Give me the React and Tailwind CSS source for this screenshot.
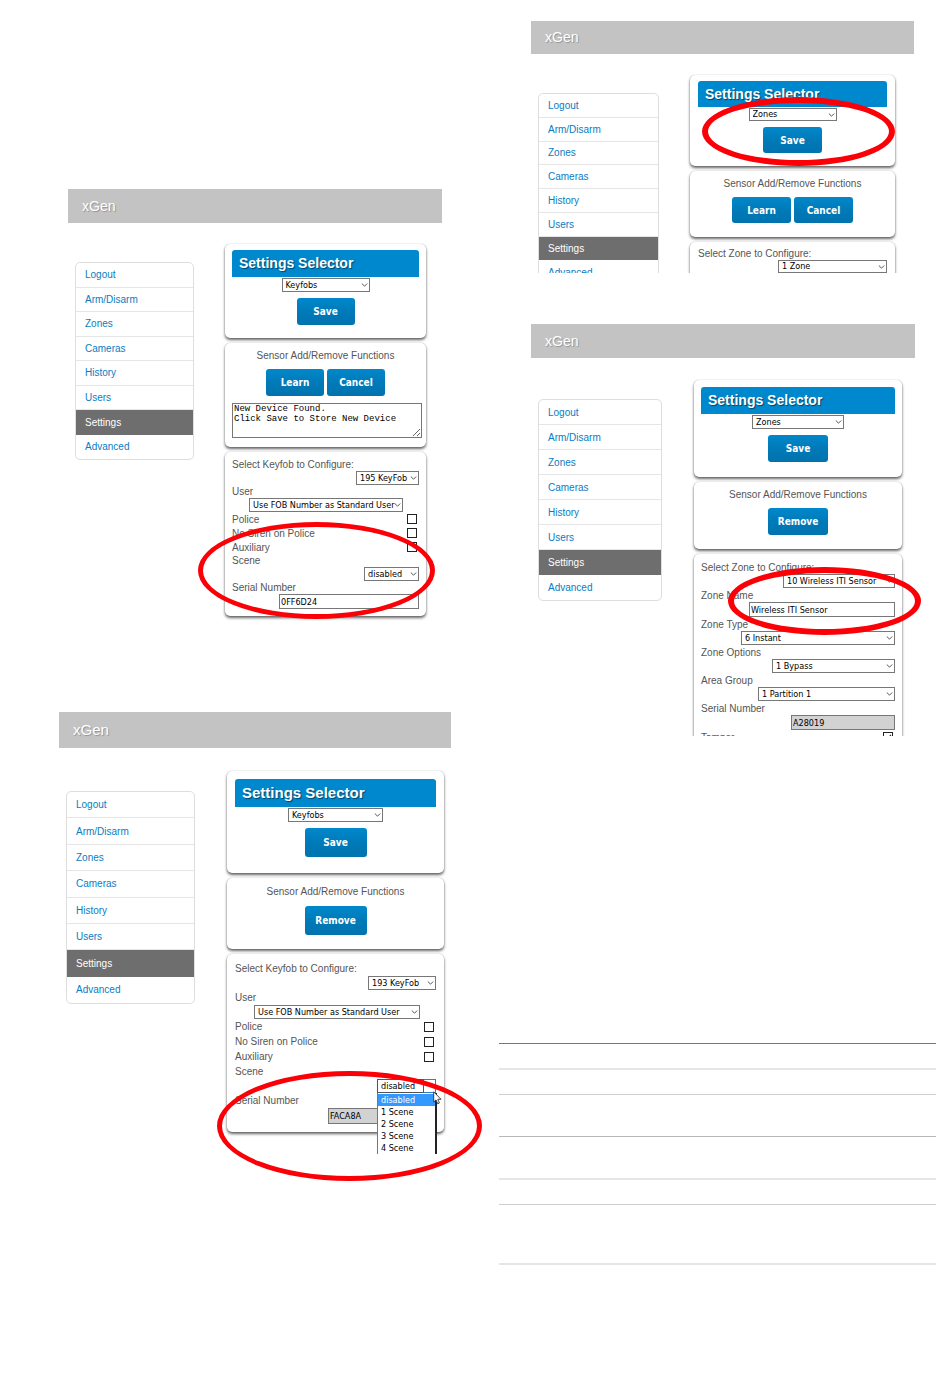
import React, { useId } from "react";
import clsx from "clsx";

const NAV_ITEMS = ["Logout", "Arm/Disarm", "Zones", "Cameras", "History", "Users", "Settings", "Advanced"];

const SCENES = ["disabled", "1 Scene", "2 Scene", "3 Scene", "4 Scene"];

// One entry per console size, the consoles are shown at slightly different scales
const SIZES = {
  small: {
    header: "h-[34px] text-[14px] pl-[14px]",
    nav: "w-[119px] h-[198px] mt-[39px]",
    gutter: "gap-x-[31px] pr-[16px]",
    stack: "pt-[21px] gap-[5px]",
    card: "px-[7px]",
    top: "pt-[6px] pb-[13px]",
    title: "h-[27px] text-[14px]",
    page: "w-[88px]",
    select: "h-[14px]",
    button: "w-[58px] h-[27px]",
    caption: "leading-[14px]",
    form: "pt-[6px] pb-[7px]",
    label: "h-[13px]",
    check: "h-[14px]",
    input: "h-[15px]",
  },
  compact: {
    header: "h-[33px] text-[14px] pl-[14px]",
    nav: "w-[121px] h-[192px] mt-[39px]",
    gutter: "gap-x-[31px] pr-[19px]",
    stack: "pt-[21px] gap-[5px]",
    card: "px-[8px]",
    top: "pt-[6px] pb-[13px]",
    title: "h-[26px] text-[14px]",
    page: "w-[88px]",
    select: "h-[13px]",
    button: "w-[59px] h-[26px]",
    caption: "leading-[14px]",
    form: "pt-[5px] pb-[7px]",
    label: "h-[13px]",
    check: "h-[14px]",
    input: "h-[15px]",
  },
  medium: {
    header: "h-[34px] text-[14px] pl-[14px]",
    nav: "w-[124px] h-[202px] mt-[41px]",
    gutter: "gap-x-[32px] pr-[13px]",
    stack: "pt-[22px] gap-[5px]",
    card: "px-[7px]",
    top: "pt-[7px] pb-[15px]",
    title: "h-[27px] text-[14px]",
    page: "w-[92px]",
    select: "h-[14px]",
    button: "w-[60px] h-[27px]",
    caption: "leading-[14px]",
    form: "pt-[6px] pb-[7px]",
    label: "h-[14px]",
    check: "h-[14px]",
    input: "h-[15px]",
  },
  large: {
    header: "h-[36px] text-[15px] pl-[14px]",
    nav: "w-[129px] h-[213px] mt-[43px]",
    gutter: "gap-x-[32px] pr-[7px]",
    stack: "pt-[23px] gap-[5px]",
    card: "px-[8px]",
    top: "pt-[8px] pb-[16px]",
    title: "h-[28px] text-[15px]",
    page: "w-[95px]",
    select: "h-[14px]",
    button: "w-[62px] h-[29px]",
    caption: "leading-[16px]",
    form: "pt-[7px] pb-[8px]",
    label: "h-[15px]",
    check: "h-[15px]",
    input: "h-[16px]",
  },
};

const FIELD_FONT = "font-['DejaVu_Sans_Condensed','DejaVu_Sans',sans-serif] text-[9px] text-black";

function Card({ size, className, children }) {
  return (
    <section
      className={clsx(
        "rounded-[5px] bg-white shadow-[0_0_1px_rgba(0,0,0,0.35),0_2px_3px_rgba(0,0,0,0.6)]",
        size.card,
        className
      )}
    >
      {children}
    </section>
  );
}

function Select({ size, id, label, value, className }) {
  return (
    <div className={clsx("relative", size.select, className)}>
      <select
        id={id}
        aria-label={label}
        defaultValue={value}
        className={clsx("block h-full w-full appearance-none border border-[#777] bg-white pl-[3px] leading-none", FIELD_FONT)}
      >
        <option>{value}</option>
      </select>
      <svg className="pointer-events-none absolute right-[2px] top-1/2 h-[4px] w-[7px] -translate-y-1/2" viewBox="0 0 7 4">
        <path d="M0.8 0.5 L3.5 3.2 L6.2 0.5" fill="none" stroke="#555" strokeWidth="1" />
      </svg>
    </div>
  );
}

function Button({ size, children }) {
  return (
    <button
      type="button"
      className={clsx(
        "rounded-[3px] bg-linear-to-b from-[#0088cc] via-[#007ab8] to-[#0073ae] text-center font-['DejaVu_Sans_Condensed','DejaVu_Sans',sans-serif] text-[10px] font-bold text-white",
        size.button
      )}
    >
      {children}
    </button>
  );
}

function SelectField({ size, label, value, className }) {
  const id = useId();
  return (
    <div>
      <label htmlFor={id} className={clsx("flex items-center", size.label)}>{label}</label>
      <Select size={size} id={id} value={value} className={clsx("ml-auto", className)} />
    </div>
  );
}

function TextField({ size, label, value, readOnly, className }) {
  const id = useId();
  return (
    <div>
      <label htmlFor={id} className={clsx("flex items-center", size.label)}>{label}</label>
      <input
        id={id}
        type="text"
        defaultValue={value}
        readOnly={readOnly}
        className={clsx(
          "ml-auto block border border-[#777] px-[1px]",
          readOnly ? "bg-[#d2d2d2]" : "bg-white",
          FIELD_FONT,
          size.input,
          className
        )}
      />
    </div>
  );
}

function CheckField({ size, label, checked }) {
  const id = useId();
  return (
    <div className={clsx("flex items-center justify-between pr-[2px]", size.check)}>
      <label htmlFor={id}>{label}</label>
      <span className="relative flex">
        <input
          id={id}
          type="checkbox"
          defaultChecked={checked}
          className="peer h-[10px] w-[10px] appearance-none border border-[#222] bg-white"
        />
        <svg className="pointer-events-none absolute inset-0 hidden h-[10px] w-[10px] peer-checked:block" viewBox="0 0 10 10">
          <path d="M2 5 L4.2 7.2 L8 2.8" fill="none" stroke="#222" strokeWidth="1.1" />
        </svg>
      </span>
    </div>
  );
}

// Scene drop-down in its opened state, the list lies over the serial number
function SceneField({ size }) {
  const id = useId();
  return (
    <div>
      <label htmlFor={id} className={clsx("flex items-center", size.label)}>Scene</label>
      <div className="relative ml-auto h-[14px] w-[59px]">
        <select
          id={id}
          defaultValue="disabled"
          className={clsx("block h-full w-full appearance-none border border-[#2f7fc0] bg-white pl-[3px] leading-none", FIELD_FONT)}
        >
          {SCENES.map((scene) => (
            <option key={scene}>{scene}</option>
          ))}
        </select>
        <div className="pointer-events-none absolute inset-y-0 left-0 w-[47px] border border-[#555]" />
        <ul
          role="listbox"
          aria-label="Scene options"
          className={clsx("absolute left-0 top-full z-10 h-[61px] w-[60px] border-l border-r-2 border-l-[#777] border-r-[#222] bg-white pt-[1px]", FIELD_FONT)}
        >
          {SCENES.map((scene, idx) => (
            <li
              key={scene}
              role="option"
              aria-selected={idx === 0}
              className={clsx("h-[12px] pl-[3px] leading-[12px]", idx === 0 && "bg-[#3399ff] text-white")}
            >
              {scene}
            </li>
          ))}
        </ul>
      </div>
    </div>
  );
}

function Ring({ className }) {
  return <div className={clsx("pointer-events-none absolute z-20 rounded-[50%] border-[#fb0007]", className)} />;
}

function Console({ size, page, actions, message, children }) {
  return (
    <div className="bg-white">
      <header className={clsx("flex items-center bg-[#c3c3c3] text-white [text-shadow:1px_1px_1px_rgba(0,0,0,0.25)]", size.header)}>
        xGen
      </header>
      <div className={clsx("flex items-start pl-[7px]", size.gutter)}>
        <nav className={clsx("grid shrink-0 auto-rows-fr overflow-hidden rounded-[5px] border border-[#dedede]", size.nav)}>
          {NAV_ITEMS.map((item) => (
            <a
              key={item}
              href="#"
              className={clsx(
                "-mx-px flex items-center pl-[10px] text-[10px]",
                item === "Settings" ? "bg-[#6e6e6e] text-white" : "border-b border-[#e6e6e6] text-[#0a7cc2] last:border-b-0"
              )}
            >
              {item}
            </a>
          ))}
        </nav>

        <div className={clsx("flex min-w-0 flex-1 flex-col", size.stack)}>
          <Card size={size} className={size.top}>
            <h2
              className={clsx(
                "flex items-center rounded-t-[3px] bg-[#0088ce] pl-[7px] font-bold text-white [text-shadow:1px_1px_1px_rgba(0,0,0,0.5)]",
                size.title
              )}
            >
              Settings Selector
            </h2>
            <Select size={size} label="Settings page" value={page} className={clsx("mx-auto mt-px", size.page)} />
            <div className="mt-[6px] flex justify-center">
              <Button size={size}>Save</Button>
            </div>
          </Card>

          <Card size={size} className={clsx("pt-[6px]", message ? "pb-[9px]" : "pb-[14px]")}>
            <p className={clsx("text-center", size.caption)}>Sensor Add/Remove Functions</p>
            <div className="mt-[6px] flex justify-center gap-[3px]">
              {actions.map((action) => (
                <Button key={action} size={size}>{action}</Button>
              ))}
            </div>
            {message && (
              <textarea
                aria-label="Status"
                defaultValue={message}
                className="-mr-[3px] mt-[7px] block h-[35px] w-[calc(100%+3px)] border border-[#777] px-[1px] font-['Liberation_Mono',monospace] text-[9px] leading-[10px] text-black"
              />
            )}
          </Card>

          <Card size={size} className={size.form}>{children}</Card>
        </div>
      </div>
    </div>
  );
}

export default function App() {
  const { small, compact, medium, large } = SIZES;

  return (
    <main className="grid min-h-screen grid-cols-[392fr_437fr] items-start gap-x-12 bg-white pl-[59px] pr-[14px] font-['Liberation_Sans',Arial,sans-serif] text-[10px] text-[#555]">
      {/* Keyfobs */}
      <div className="pt-[189px]">
        <div className="relative mx-[9px]">
          <Console
            size={small}
            page="Keyfobs"
            actions={["Learn", "Cancel"]}
            message={"New Device Found.\nClick Save to Store New Device"}
          >
            <SelectField size={small} label="Select Keyfob to Configure:" value="195 KeyFob" className="w-[63px]" />
            <SelectField size={small} label="User" value="Use FOB Number as Standard User" className="mr-4 w-[154px]" />
            <CheckField size={small} label="Police" />
            <CheckField size={small} label="No Siren on Police" />
            <CheckField size={small} label="Auxiliary" />
            <SelectField size={small} label="Scene" value="disabled" className="w-[55px]" />
            <TextField size={small} label="Serial Number" value="0FF6D24" className="w-[140px]" />
          </Console>
          <Ring className="right-[7px] top-[333px] h-[97px] w-[237px] border-[5px]" />
        </div>

        <div className="relative mt-24">
          <Console size={large} page="Keyfobs" actions={["Remove"]}>
            <SelectField size={large} label="Select Keyfob to Configure:" value="193 KeyFob" className="w-[68px]" />
            <SelectField size={large} label="User" value="Use FOB Number as Standard User" className="mr-4 w-[166px]" />
            <CheckField size={large} label="Police" />
            <CheckField size={large} label="No Siren on Police" />
            <CheckField size={large} label="Auxiliary" />
            <SceneField size={large} />
            <TextField size={large} label="Serial Number" value="FACA8A" readOnly className="w-[108px]" />
          </Console>
          <Ring className="-right-[31px] top-[359px] h-[110px] w-[265px] border-[5px]" />
          {/* Mouse pointer */}
          <svg className="absolute right-[9px] top-[379px] z-30 h-[14px] w-[9px]" viewBox="0 0 9 14">
            <path d="M0.7 0.8 V11 L3 8.9 L4.7 12.8 L6.4 12 L4.8 8.3 H8 Z" fill="#fff" stroke="#333" strokeWidth="0.9" />
          </svg>
        </div>
      </div>

      {/* Zones */}
      <div className="pt-[21px]">
        <div className="relative ml-8 mr-[22px]">
          <div className="h-[252px] overflow-hidden">
            <Console size={compact} page="Zones" actions={["Learn", "Cancel"]}>
              <SelectField size={compact} label="Select Zone to Configure:" value="1 Zone" className="w-[109px]" />
            </Console>
          </div>
          <Ring className="right-[19px] top-[76px] h-[69px] w-[193px] border-[6px]" />
        </div>

        <div className="relative ml-8 mr-[21px] mt-[51px]">
          <div className="h-[412px] overflow-hidden">
            <Console size={medium} page="Zones" actions={["Remove"]}>
              <SelectField size={medium} label="Select Zone to Configure:" value="10 Wireless ITI Sensor" className="w-[112px]" />
              <TextField size={medium} label="Zone Name" value="Wireless ITI Sensor" className="w-[146px]" />
              <SelectField size={medium} label="Zone Type" value="6 Instant" className="w-[154px]" />
              <SelectField size={medium} label="Zone Options" value="1 Bypass" className="w-[123px]" />
              <SelectField size={medium} label="Area Group" value="1 Partition 1" className="w-[137px]" />
              <TextField size={medium} label="Serial Number" value="A28019" readOnly className="w-[104px]" />
              <CheckField size={medium} label="Tamper" checked />
            </Console>
          </div>
          <Ring className="-right-[6px] top-[243px] h-[68px] w-[193px] border-[6px]" />
        </div>

        {/* Empty ruled rows */}
        <div className="mt-[307px]">
          <div className="h-[25px] border-t border-[#777]" />
          <div className="h-[26px] border-t-2 border-[#e6e6e6]" />
          <div className="h-[42px] border-t border-[#cfcfcf]" />
          <div className="h-[42px] border-t border-[#b8b8b8]" />
          <div className="h-[26px] border-t-2 border-[#e6e6e6]" />
          <div className="h-[59px] border-t border-[#cfcfcf]" />
          <div className="border-t-2 border-[#e6e6e6]" />
        </div>
      </div>
    </main>
  );
}
